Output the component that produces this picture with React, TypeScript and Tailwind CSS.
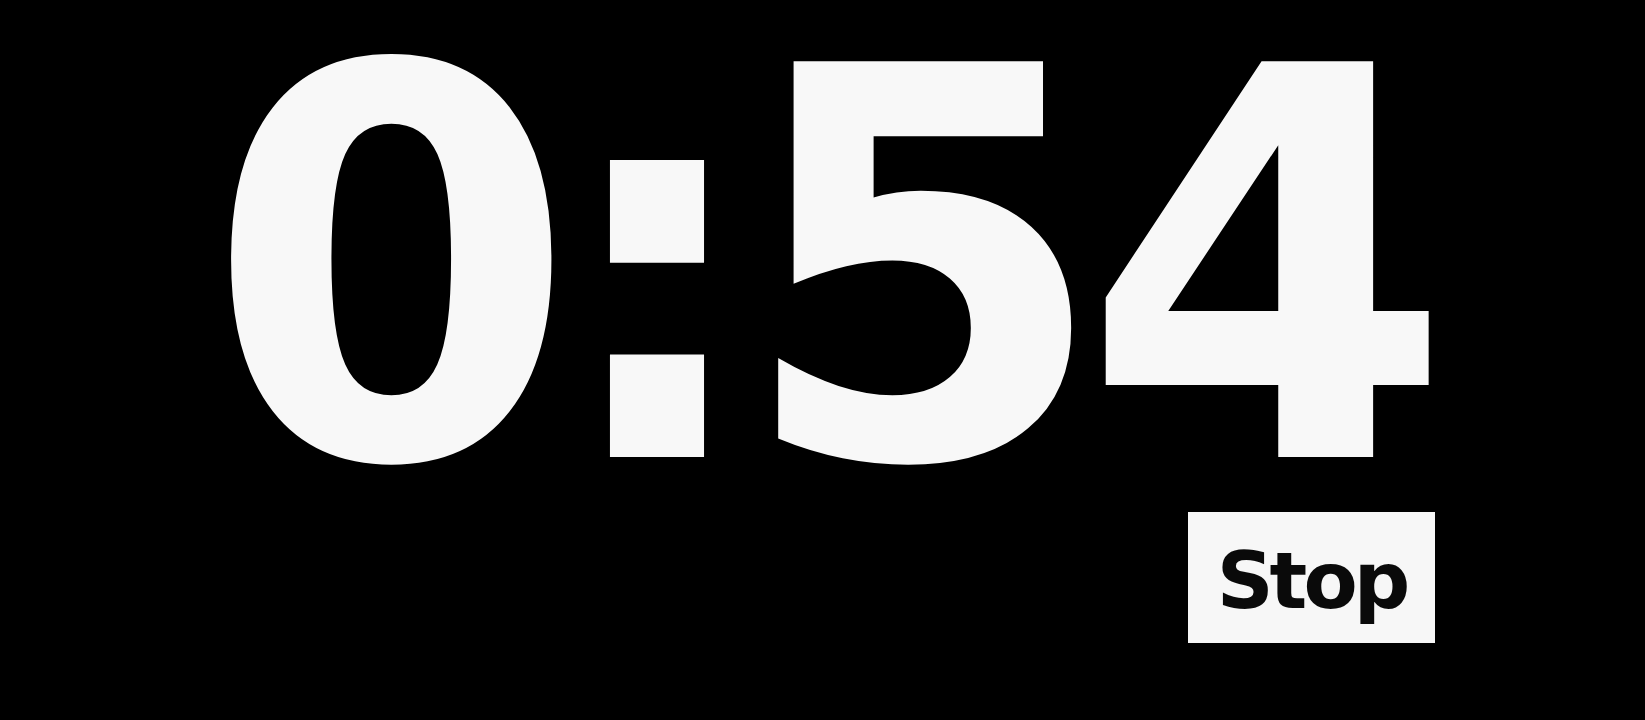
import React from "react";

export default function App() {
  return (
    <div
      className="w-full h-[720px] bg-black overflow-hidden flex flex-col"
      style={{ fontFamily: '"DejaVu Sans", Verdana, sans-serif' }}
    >
      <div className="flex justify-center pr-[12px]">
        <div className="pt-[29px] text-[543px] leading-[480px] font-bold tracking-[-0.05em] scale-x-[0.983] text-[#f8f8f8] whitespace-nowrap">
          0:54
        </div>
      </div>
      <div className="flex justify-end pr-[210px] mt-[3px]">
        <button className="w-[247px] h-[131px] bg-[#f7f7f7] text-[#0a0a0a] text-[79px] leading-none font-bold tracking-[-0.05em] flex items-center justify-center pt-[7px]">
          Stop
        </button>
      </div>
    </div>
  );
}
